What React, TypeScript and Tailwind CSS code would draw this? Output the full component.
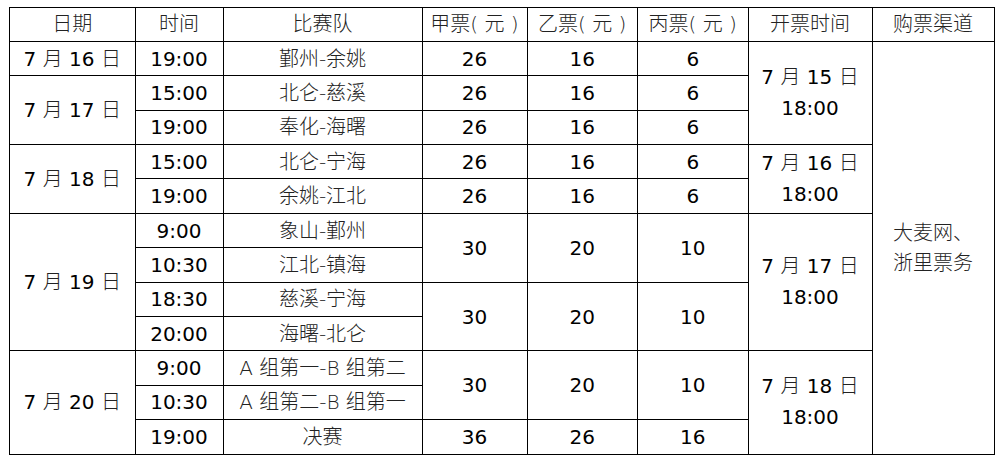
import type { ReactNode } from 'react'

const font = { fontFamily: '"DejaVu Sans", "Noto Sans CJK SC", sans-serif' }

function Td({ children, rows, cn = '' }: { children?: ReactNode; rows?: number; cn?: string }) {
  return (
    <td rowSpan={rows} className={`border border-black p-0 text-center align-middle ${cn}`}>
      {children}
    </td>
  )
}

function Th({ children }: { children: ReactNode }) {
  return <th className="border border-black p-0 text-center align-middle font-light text-[#222]">{children}</th>
}

// date like "7 月 16 日": digits stay regular, the CJK glyphs are lighter
function Day({ d }: { d: string }) {
  return (
    <>
      7 <span className="font-light text-[#222]">月</span> {d} <span className="font-light text-[#222]">日</span>
    </>
  )
}

function Open({ day }: { day: string }) {
  return (
    <div className="leading-[31px]">
      <div><Day d={day} /></div>
      <div>18:00</div>
    </div>
  )
}

const team = 'font-light text-[#222]'

export default function App() {
  return (
    <div className="min-h-[465px] w-[1002px] bg-white pl-[9px] pt-[6.5px] text-black" style={font}>
      <table className="table-fixed border-collapse border border-black text-[20px] leading-[30px]">
        <colgroup>
          <col className="w-[125.5px]" />
          <col className="w-[88px]" />
          <col className="w-[199px]" />
          <col className="w-[105px]" />
          <col className="w-[110.5px]" />
          <col className="w-[110.5px]" />
          <col className="w-[124px]" />
          <col className="w-[122px]" />
        </colgroup>
        <thead>
          <tr className="h-[34.4px]">
            <Th>日期</Th>
            <Th>时间</Th>
            <Th>比赛队</Th>
            <Th>甲票( 元 )</Th>
            <Th>乙票( 元 )</Th>
            <Th>丙票( 元 )</Th>
            <Th>开票时间</Th>
            <Th>购票渠道</Th>
          </tr>
        </thead>
        <tbody>
          <tr className="h-[34.4px]">
            <Td><Day d="16" /></Td>
            <Td>19:00</Td>
            <Td cn={team}>鄞州-余姚</Td>
            <Td>26</Td>
            <Td>16</Td>
            <Td>6</Td>
            <Td rows={3}><Open day="15" /></Td>
            <Td rows={12} cn={team}>
              <div className="leading-[30px]">
                <div>大麦网、</div>
                <div>浙里票务</div>
              </div>
            </Td>
          </tr>
          <tr className="h-[34.4px]">
            <Td rows={2}><Day d="17" /></Td>
            <Td>15:00</Td>
            <Td cn={team}>北仑-慈溪</Td>
            <Td>26</Td>
            <Td>16</Td>
            <Td>6</Td>
          </tr>
          <tr className="h-[34.4px]">
            <Td>19:00</Td>
            <Td cn={team}>奉化-海曙</Td>
            <Td>26</Td>
            <Td>16</Td>
            <Td>6</Td>
          </tr>
          <tr className="h-[34.4px]">
            <Td rows={2}><Day d="18" /></Td>
            <Td>15:00</Td>
            <Td cn={team}>北仑-宁海</Td>
            <Td>26</Td>
            <Td>16</Td>
            <Td>6</Td>
            <Td rows={2}><Open day="16" /></Td>
          </tr>
          <tr className="h-[34.4px]">
            <Td>19:00</Td>
            <Td cn={team}>余姚-江北</Td>
            <Td>26</Td>
            <Td>16</Td>
            <Td>6</Td>
          </tr>
          <tr className="h-[34.4px]">
            <Td rows={4}><Day d="19" /></Td>
            <Td>9:00</Td>
            <Td cn={team}>象山-鄞州</Td>
            <Td rows={2}>30</Td>
            <Td rows={2}>20</Td>
            <Td rows={2}>10</Td>
            <Td rows={4}><Open day="17" /></Td>
          </tr>
          <tr className="h-[34.4px]">
            <Td>10:30</Td>
            <Td cn={team}>江北-镇海</Td>
          </tr>
          <tr className="h-[34.4px]">
            <Td>18:30</Td>
            <Td cn={team}>慈溪-宁海</Td>
            <Td rows={2}>30</Td>
            <Td rows={2}>20</Td>
            <Td rows={2}>10</Td>
          </tr>
          <tr className="h-[34.4px]">
            <Td>20:00</Td>
            <Td cn={team}>海曙-北仑</Td>
          </tr>
          <tr className="h-[34.4px]">
            <Td rows={3}><Day d="20" /></Td>
            <Td>9:00</Td>
            <Td cn={team}>A 组第一-B 组第二</Td>
            <Td rows={2}>30</Td>
            <Td rows={2}>20</Td>
            <Td rows={2}>10</Td>
            <Td rows={3}><Open day="18" /></Td>
          </tr>
          <tr className="h-[34.4px]">
            <Td>10:30</Td>
            <Td cn={team}>A 组第二-B 组第一</Td>
          </tr>
          <tr className="h-[34.4px]">
            <Td>19:00</Td>
            <Td cn={team}>决赛</Td>
            <Td>36</Td>
            <Td>26</Td>
            <Td>16</Td>
          </tr>
        </tbody>
      </table>
    </div>
  )
}
